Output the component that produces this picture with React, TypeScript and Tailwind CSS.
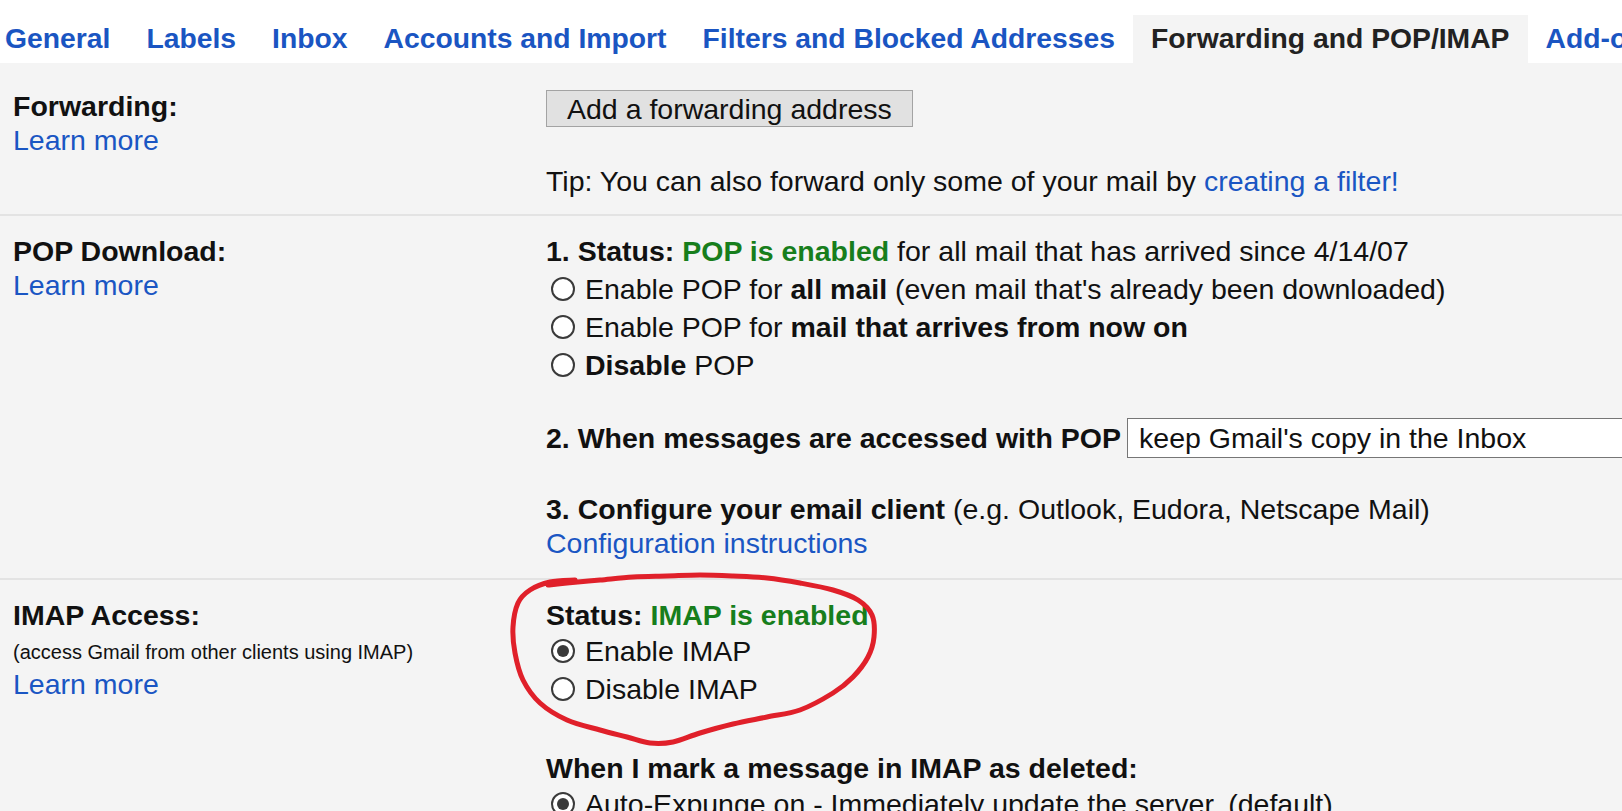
import { ReactNode } from 'react'

const tabs = [
  'General',
  'Labels',
  'Inbox',
  'Accounts and Import',
  'Filters and Blocked Addresses',
  'Forwarding and POP/IMAP',
  'Add-ons',
]

// hand drawn red loop around the IMAP status block
const loop: [number, number][] = [
  [548, 585], [567, 583], [600, 580], [633, 577], [667, 576], [700, 575],
  [733, 576], [767, 578], [800, 583], [833, 590], [858, 600], [872, 615],
  [874, 637], [868, 657], [853, 677], [833, 693], [800, 710], [767, 717],
  [733, 724], [700, 733], [673, 742], [650, 743], [627, 737], [600, 730],
  [567, 720], [540, 703], [523, 680], [515, 653], [513, 627], [518, 603],
  [530, 590], [550, 582], [575, 580],
]

function smoothPath(pts: [number, number][]) {
  let d = `M${pts[0][0]},${pts[0][1]}`
  for (let i = 0; i < pts.length - 1; i++) {
    const p0 = pts[i - 1] || pts[i]
    const p1 = pts[i]
    const p2 = pts[i + 1]
    const p3 = pts[i + 2] || p2
    const c1x = p1[0] + (p2[0] - p0[0]) / 6
    const c1y = p1[1] + (p2[1] - p0[1]) / 6
    const c2x = p2[0] - (p3[0] - p1[0]) / 6
    const c2y = p2[1] - (p3[1] - p1[1]) / 6
    d += ` C${c1x},${c1y} ${c2x},${c2y} ${p2[0]},${p2[1]}`
  }
  return d
}

function Radio({ checked = false }: { checked?: boolean }) {
  return (
    <span className="ml-[5px] mr-[10px] w-[24px] h-[24px] shrink-0 rounded-full border-2 border-[#3a3a3a] bg-white flex items-center justify-center">
      {checked && <span className="w-[12px] h-[12px] rounded-full bg-[#3a3a3a]" />}
    </span>
  )
}

function RadioRow({ checked, children }: { checked?: boolean; children: ReactNode }) {
  return (
    <div className="h-[38px] flex items-center whitespace-nowrap">
      <Radio checked={checked} />
      <span>{children}</span>
    </div>
  )
}

function Section({
  label,
  className,
  children,
}: {
  label: ReactNode
  className: string
  children: ReactNode
}) {
  return (
    <div className={`flex border-b-2 border-[#e3e3e3] ${className}`}>
      <div className="w-[546px] shrink-0 pl-[13px]">{label}</div>
      <div className="flex-1 min-w-0">{children}</div>
    </div>
  )
}

const link = 'text-[#1a56c3]'

export default function App() {
  return (
    <div className="relative w-[1622px] h-[811px] overflow-hidden bg-[#f4f4f4] text-[#111] text-[28.5px] leading-[34px] font-['Liberation_Sans',Arial,sans-serif]">
      <div className="h-[63px] bg-white flex items-end">
        <div className="ml-[-13px] flex text-[28.3px]">
          {tabs.map((t) => (
            <div
              key={t}
              className={`h-[48px] px-[18px] pt-[6px] font-bold whitespace-nowrap ${
                t === 'Forwarding and POP/IMAP' ? 'bg-[#f4f4f4] text-[#222]' : 'text-[#1a55c2]'
              }`}
            >
              {t}
            </div>
          ))}
        </div>
      </div>

      <Section
        className="pt-[27px] pb-[16px]"
        label={
          <>
            <div className="font-bold mt-[-1px]">Forwarding:</div>
            <div className={link}>Learn more</div>
          </>
        }
      >
        <div className="inline-flex items-center h-[37px] px-[20px] bg-[#e1e1e1] border border-[#a3a3a3] whitespace-nowrap">
          Add a forwarding address
        </div>
        <div className="mt-[37px] whitespace-nowrap">
          Tip: You can also forward only some of your mail by{' '}
          <span className={link}>creating a filter!</span>
        </div>
      </Section>

      <Section
        className="pt-[18px] pb-[18px]"
        label={
          <>
            <div className="font-bold">POP Download:</div>
            <div className={link}>Learn more</div>
          </>
        }
      >
        <div className="whitespace-nowrap">
          <b>1. Status: </b>
          <b className="text-[#177e1c]">POP is enabled</b> for all mail that has arrived since 4/14/07
        </div>
        <div className="mt-[2px]">
          <RadioRow>
            Enable POP for <b>all mail</b> (even mail that's already been downloaded)
          </RadioRow>
          <RadioRow>
            Enable POP for <b>mail that arrives from now on</b>
          </RadioRow>
          <RadioRow>
            <b>Disable</b> POP
          </RadioRow>
        </div>
        <div className="mt-[34px] h-[40px] flex items-center whitespace-nowrap">
          <b>2. When messages are accessed with POP</b>
          <div className="ml-[6px] w-[600px] shrink-0 h-[40px] flex items-center pl-[11px] bg-white border border-[#767676]">
            keep Gmail's copy in the Inbox
          </div>
        </div>
        <div className="mt-[34px] whitespace-nowrap">
          <b>3. Configure your email client</b> (e.g. Outlook, Eudora, Netscape Mail)
        </div>
        <div className={link}>Configuration instructions</div>
      </Section>

      <Section
        className="pt-[18px] pb-[18px] border-b-0"
        label={
          <>
            <div className="font-bold">IMAP Access:</div>
            <div className="mt-[5px] text-[20px] leading-[30px] whitespace-nowrap">
              (access Gmail from other clients using IMAP)
            </div>
            <div className={link}>Learn more</div>
          </>
        }
      >
        <div className="whitespace-nowrap">
          <b>Status: </b>
          <b className="text-[#177e1c]">IMAP is enabled</b>
        </div>
        <RadioRow checked>Enable IMAP</RadioRow>
        <RadioRow>Disable IMAP</RadioRow>
        <div className="mt-[43px] font-bold whitespace-nowrap">
          When I mark a message in IMAP as deleted:
        </div>
        <RadioRow checked>Auto-Expunge on - Immediately update the server. (default)</RadioRow>
      </Section>

      <svg
        className="absolute inset-0 pointer-events-none"
        width={1622}
        height={811}
        viewBox="0 0 1622 811"
      >
        <path
          d={smoothPath(loop)}
          fill="none"
          stroke="#e0202a"
          strokeWidth={5}
          strokeLinecap="round"
          strokeLinejoin="round"
        />
      </svg>
    </div>
  )
}
